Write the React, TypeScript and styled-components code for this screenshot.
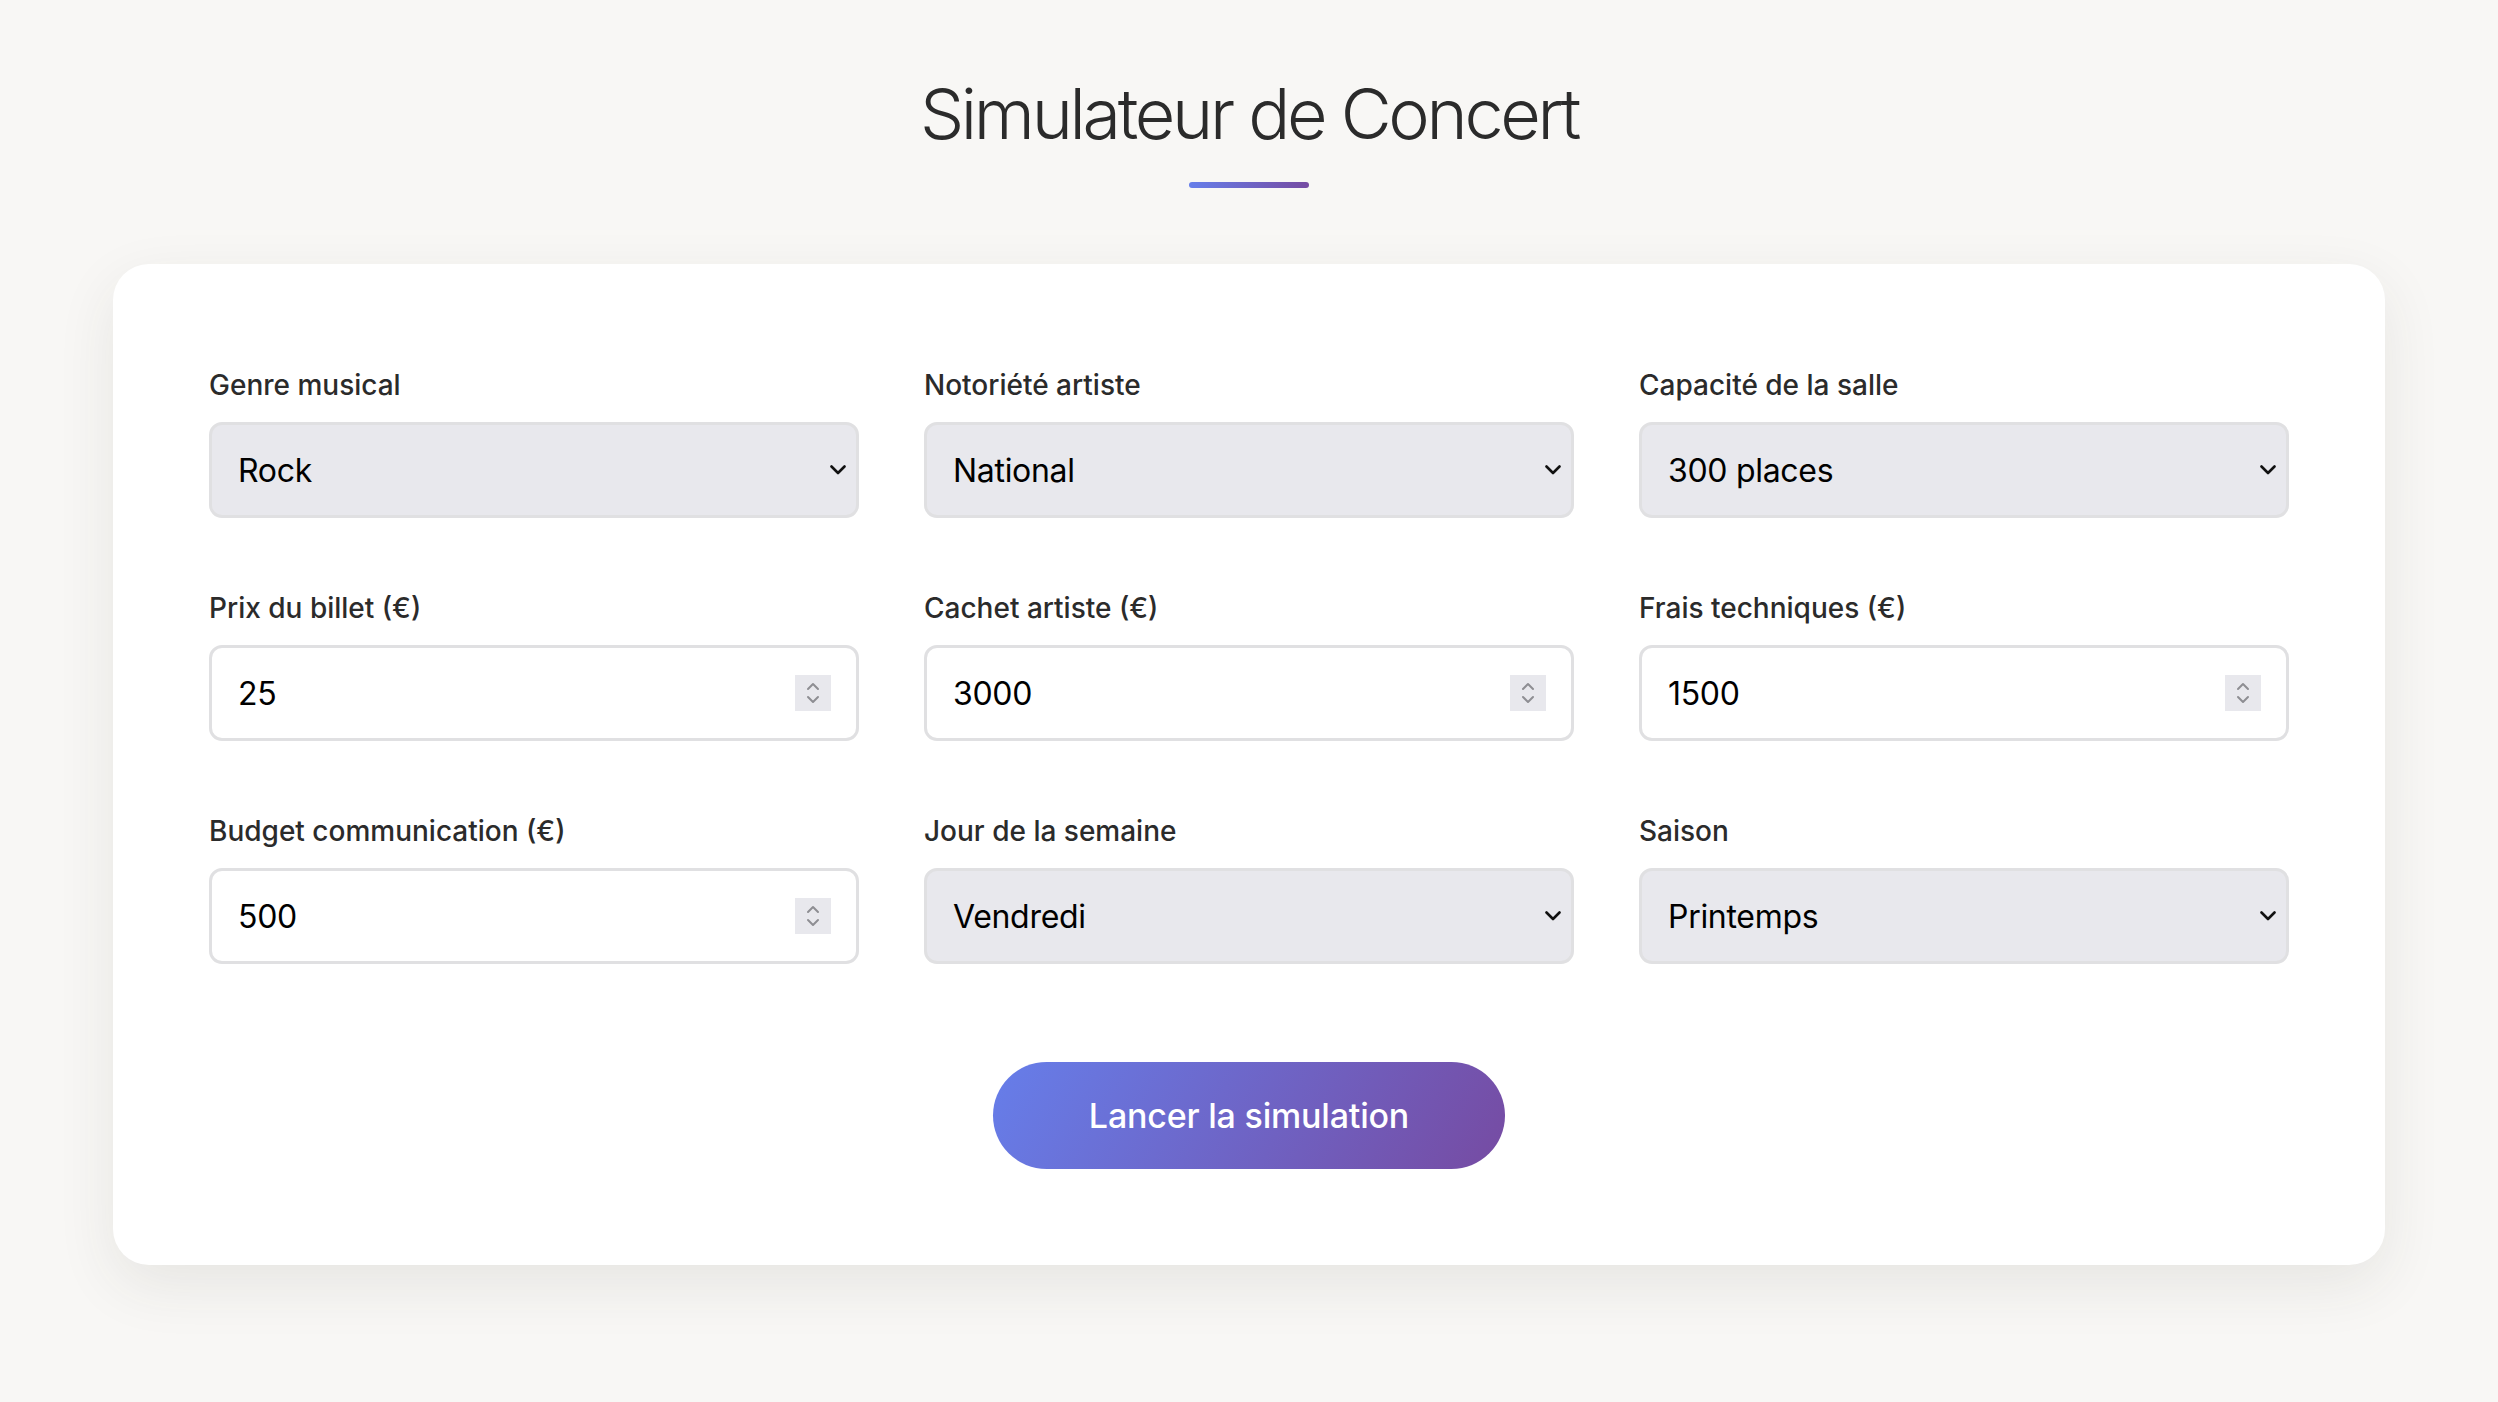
import styled, { createGlobalStyle } from "styled-components"

const GlobalStyle = createGlobalStyle`
    * { box-sizing: border-box; }
    body {
        margin: 0;
        background: #f8f7f5;
        font-family: Inter, "Liberation Sans", sans-serif;
        color: #1d1d1f;
    }
`

type Field = {
    label: string,
    kind: "select" | "number",
    value: string
}

const fields: Field[] = [
    { label: "Genre musical", kind: "select", value: "Rock" },
    { label: "Notoriété artiste", kind: "select", value: "National" },
    { label: "Capacité de la salle", kind: "select", value: "300 places" },
    { label: "Prix du billet (€)", kind: "number", value: "25" },
    { label: "Cachet artiste (€)", kind: "number", value: "3000" },
    { label: "Frais techniques (€)", kind: "number", value: "1500" },
    { label: "Budget communication (€)", kind: "number", value: "500" },
    { label: "Jour de la semaine", kind: "select", value: "Vendredi" },
    { label: "Saison", kind: "select", value: "Printemps" },
]

function Chevron() {
    return (
        <StyledChevron width="16" height="10" viewBox="0 0 16 10">
            <polyline points="1.5,1.5 8,8 14.5,1.5" fill="none" stroke="#111" strokeWidth="2.6" strokeLinecap="round" strokeLinejoin="round" />
        </StyledChevron>
    )
}

function Spinner() {
    return (
        <StyledSpinner>
            <svg width="14" height="28" viewBox="0 0 14 28">
                <polyline points="2,10 7,5 12,10" fill="none" stroke="#8e8e93" strokeWidth="2" strokeLinecap="round" strokeLinejoin="round" />
                <polyline points="2,18 7,23 12,18" fill="none" stroke="#8e8e93" strokeWidth="2" strokeLinecap="round" strokeLinejoin="round" />
            </svg>
        </StyledSpinner>
    )
}

export default function App() {
    return (
        <>
            <GlobalStyle />
            <Page>
                <Title>Simulateur de Concert</Title>
                <TitleBar />
                <Card>
                    <FormGrid>
                        {fields.map((f) => (
                            <FieldGroup key={f.label}>
                                <Label>{f.label}</Label>
                                {f.kind === "select" ? (
                                    <SelectWrap>
                                        <StyledSelect defaultValue={f.value}>
                                            <option>{f.value}</option>
                                        </StyledSelect>
                                        <Chevron />
                                    </SelectWrap>
                                ) : (
                                    <NumberBox>
                                        <NumberInput type="number" defaultValue={f.value} />
                                        <Spinner />
                                    </NumberBox>
                                )}
                            </FieldGroup>
                        ))}
                    </FormGrid>
                    <ButtonRow>
                        <SimButton>Lancer la simulation</SimButton>
                    </ButtonRow>
                </Card>
            </Page>
        </>
    )
}

const Page = styled.main`
    display: flex;
    flex-direction: column;
    align-items: center;
    padding: 72px 113px 137px;
    min-height: 100vh;
`
const Title = styled.h1`
    margin: 0;
    font-size: 70px;
    line-height: 84px;
    font-weight: 300;
    color: #2b2b2b;
    letter-spacing: -3.3px;
`
const TitleBar = styled.div`
    width: 120px;
    height: 6px;
    border-radius: 3px;
    margin-top: 26px;
    background: linear-gradient(90deg, #667eea, #764ba2);
`
const Card = styled.section`
    width: 100%;
    margin-top: 76px;
    background: #fff;
    border-radius: 36px;
    padding: 100px 96px 96px;
    box-shadow: 0 20px 60px rgba(60, 50, 40, 0.09);
`
const FormGrid = styled.div`
    display: grid;
    grid-template-columns: repeat(3, 1fr);
    column-gap: 65px;
    row-gap: 69px;
`
const FieldGroup = styled.div`
    display: flex;
    flex-direction: column;
    gap: 16px;
`
const Label = styled.label`
    font-size: 28px;
    line-height: 42px;
    font-weight: 500;
    color: #2b2b2b;
`
const SelectWrap = styled.div`
    position: relative;
    height: 96px;
`
const StyledSelect = styled.select`
    appearance: none;
    width: 100%;
    height: 100%;
    border: 3px solid #e0e0e2;
    border-radius: 13px;
    background: #e8e8ed;
    padding: 0 50px 0 26px;
    font-family: Inter, "Liberation Sans", sans-serif;
    font-size: 32px;
    letter-spacing: -0.3px;
    color: #000;
    outline: none;
`
const StyledChevron = styled.svg`
    position: absolute;
    right: 13px;
    top: 43px;
    pointer-events: none;
`
const NumberBox = styled.div`
    display: flex;
    align-items: center;
    height: 96px;
    border: 3px solid #e0e0e2;
    border-radius: 13px;
    background: #fff;
    padding: 0 25px 0 26px;
`
const NumberInput = styled.input`
    flex: 1;
    min-width: 0;
    border: none;
    outline: none;
    background: transparent;
    padding: 0;
    font-family: Inter, "Liberation Sans", sans-serif;
    font-size: 32px;
    letter-spacing: -0.3px;
    color: #000;
    -moz-appearance: textfield;
    &::-webkit-inner-spin-button,
    &::-webkit-outer-spin-button {
        -webkit-appearance: none;
        margin: 0;
    }
`
const StyledSpinner = styled.span`
    display: flex;
    align-items: center;
    justify-content: center;
    width: 36px;
    height: 36px;
    background: #e8e8ed;
`
const ButtonRow = styled.div`
    display: flex;
    justify-content: center;
    margin-top: 98px;
`
const SimButton = styled.button`
    height: 107px;
    padding: 0 96px;
    border: none;
    border-radius: 54px;
    background: linear-gradient(120deg, #667eea, #764ba2);
    color: #fff;
    font-family: Inter, "Liberation Sans", sans-serif;
    font-size: 34px;
    font-weight: 500;
    letter-spacing: -0.2px;
    cursor: pointer;
`
